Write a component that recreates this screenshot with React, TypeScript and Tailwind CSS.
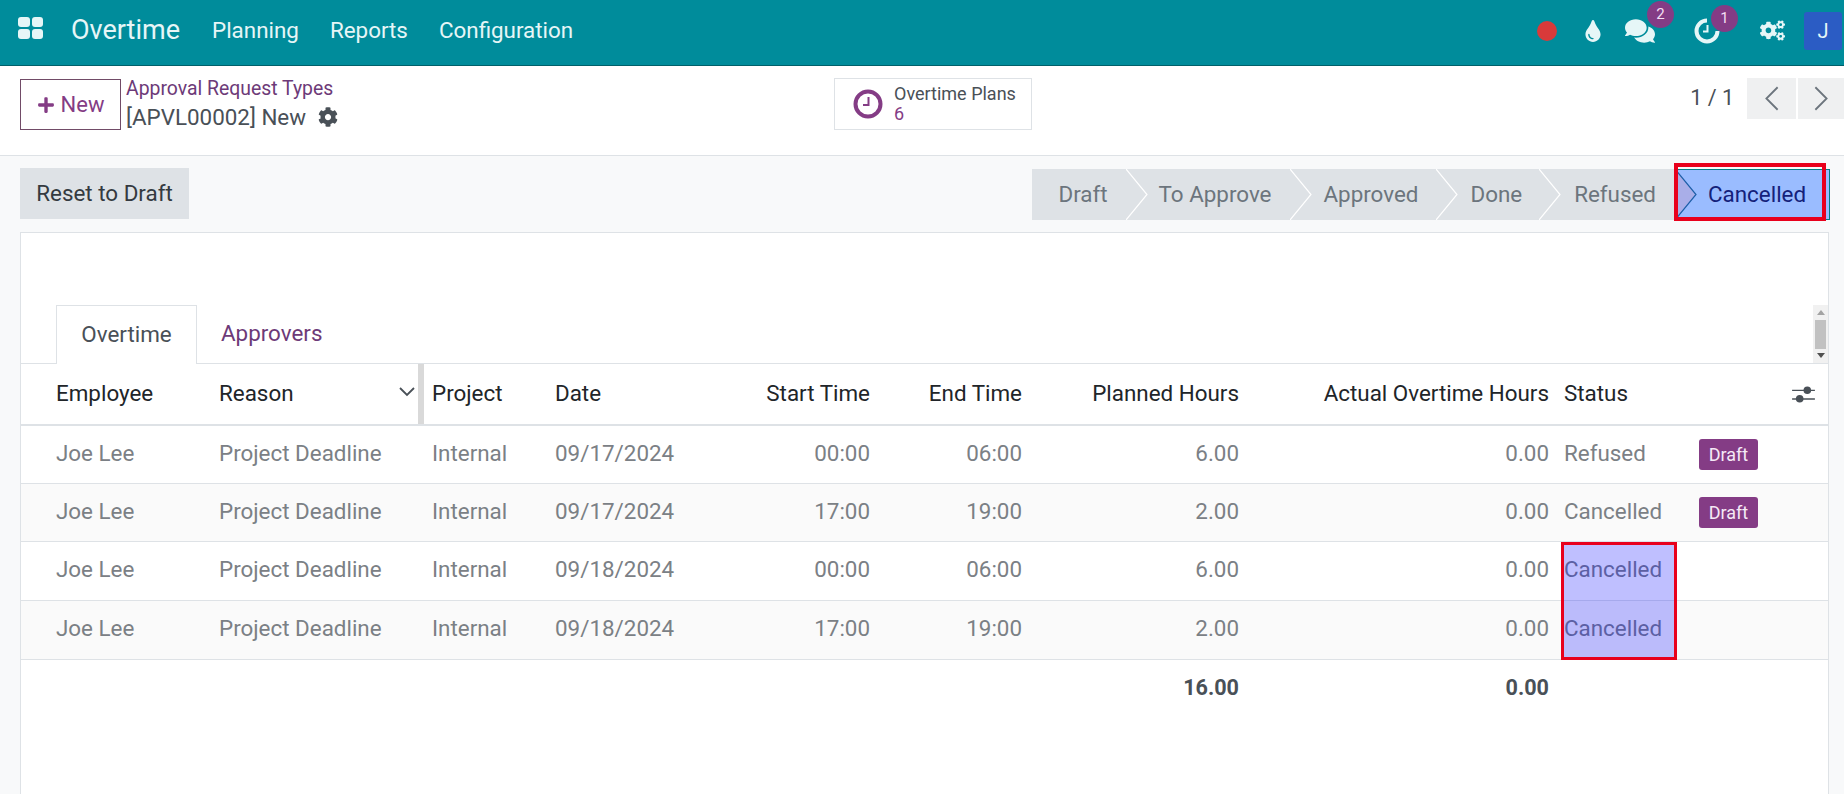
import { FaCog, FaCogs, FaComments, FaPlus, FaTint } from 'react-icons/fa';

interface Row {
  date: string;
  start: string;
  end: string;
  planned: string;
  status: string;
  badge?: boolean;
}

const rows: Row[] = [
  { date: '09/17/2024', start: '00:00', end: '06:00', planned: '6.00', status: 'Refused', badge: true },
  { date: '09/17/2024', start: '17:00', end: '19:00', planned: '2.00', status: 'Cancelled', badge: true },
  { date: '09/18/2024', start: '00:00', end: '06:00', planned: '6.00', status: 'Cancelled' },
  { date: '09/18/2024', start: '17:00', end: '19:00', planned: '2.00', status: 'Cancelled' },
];

// Status bar stages, widths come from the text plus the padding
const stages = [
  { label: 'Draft', className: 'pl-[26px] pr-[18px]' },
  { label: 'To Approve', className: 'pl-[33px] pr-[18px]' },
  { label: 'Approved', className: 'pl-[34px] pr-[18px]' },
  { label: 'Done', className: 'pl-[34px] pr-[17px]' },
  { label: 'Refused', className: 'pl-[35px] pr-[19px]' },
];

function AppsIcon() {
  return (
    <div className="grid grid-cols-2 gap-[2px] w-[25px] h-[22px]">
      <span className="rounded-[3px] bg-[#e6f6f7]" />
      <span className="rounded-[3px] bg-[#e6f6f7]" />
      <span className="rounded-[3px] bg-[#e6f6f7]" />
      <span className="rounded-[3px] bg-[#e6f6f7]" />
    </div>
  );
}

function CountBadge({ value, className }: { value: string; className: string }) {
  return (
    <span className={`absolute flex items-center justify-center w-[27px] h-[27px] rounded-full bg-[#843c85] text-[#f3dff3] text-[15px] ${className}`}>
      {value}
    </span>
  );
}

function Navbar() {
  return (
    <header className="h-[66px] shrink-0 flex items-center pb-[4px] bg-[#008c9b] border-b border-[#00606a] text-[#e6f6f7]">
      <div className="ml-[18px] mr-[28px] mb-[5px] flex items-center">
        <AppsIcon />
      </div>
      <span className="text-[27px] mr-[32px]">Overtime</span>
      <nav className="flex gap-[31px] text-[22.4px]">
        <span>Planning</span>
        <span>Reports</span>
        <span>Configuration</span>
      </nav>
      <div className="ml-auto flex items-center h-full">
        <span className="w-[20px] h-[20px] rounded-full bg-[#d93a3a]" />
        <FaTint className="ml-[25px] text-[22px]" />
        <div className="relative ml-[21px]">
          <FaComments className="text-[30px]" />
          <CountBadge value="2" className="-top-[15px] left-[22px]" />
        </div>
        <div className="relative ml-[39px]">
          <svg viewBox="0 0 26 26" className="w-[26px] h-[26px]" fill="none" stroke="currentColor">
            <path d="M13 2.5 A10.5 10.5 0 1 0 23.5 13" strokeWidth="4" />
            <path d="M13.5 7v6.5H9" strokeWidth="2" />
          </svg>
          <CountBadge value="1" className="-top-[13px] left-[17px]" />
        </div>
        <FaCogs className="ml-[40px] text-[25px]" />
        <span className="ml-[19px] mr-[2px] w-[38px] h-[38px] rounded-[3px] bg-[#2b5cc4] flex items-center justify-center text-[20px]">J</span>
      </div>
    </header>
  );
}

function ControlPanel() {
  return (
    <div className="h-[90px] shrink-0 flex items-start bg-white border-b border-[#dee2e6] pl-[20px]">
      <button className="mt-[13px] w-[101px] h-[51px] flex items-center justify-center gap-[6px] border border-[#714b67] text-[#843c85] text-[22px]">
        <FaPlus className="text-[18px]" />
        New
      </button>
      <div className="ml-[5px] mt-[10px] w-[708px]">
        <div className="text-[#6d3a78] text-[19.4px] leading-[26px]">Approval Request Types</div>
        <div className="flex items-center gap-[12px] text-[#495057] text-[22.4px] leading-[30px]">
          [APVL00002] New
          <FaCog className="text-[20px]" />
        </div>
      </div>
      <button className="mt-[12px] w-[198px] h-[52px] flex items-center border border-[#dee2e6] pl-[18px]">
        <svg viewBox="0 0 30 30" className="w-[30px] h-[30px] text-[#843c85]" fill="none" stroke="currentColor">
          <circle cx="15" cy="15" r="12.5" strokeWidth="4" />
          <path d="M15.5 8v8H10" strokeWidth="2" />
        </svg>
        <div className="ml-[11px] text-left text-[18px] leading-[20px]">
          <div className="text-[#495057]">Overtime Plans</div>
          <div className="text-[#843c85]">6</div>
        </div>
      </button>
      <div className="ml-auto flex items-start mt-[12px]">
        <span className="mt-[6px] mr-[13px] text-[#495057] text-[21.5px] leading-[28px]">1 / 1</span>
        <button className="w-[49px] h-[41px] bg-[#eff0f1] flex items-center justify-center">
          <svg viewBox="0 0 14 24" className="w-[16px] h-[27px]" fill="none" stroke="#6c757d" strokeWidth="1.6">
            <path d="M12 2 2 12l10 10" />
          </svg>
        </button>
        <button className="ml-[2px] w-[46px] h-[41px] bg-[#eff0f1] flex items-center justify-center">
          <svg viewBox="0 0 14 24" className="w-[16px] h-[27px]" fill="none" stroke="#6c757d" strokeWidth="1.6">
            <path d="M2 2l10 10L2 22" />
          </svg>
        </button>
      </div>
    </div>
  );
}

function StatusBar() {
  return (
    <div className="mt-px flex h-[51px] text-[22.4px]">
      {stages.map((stage, i) => (
        <div key={stage.label} className={`relative flex items-center bg-[#dee2e6] text-[#6c757d] ${stage.className}`}>
          {stage.label}
          {i > 0 && (
            <svg viewBox="0 0 22 51" className="absolute left-0 top-0 w-[22px] h-[51px]" fill="none" stroke="#ffffff" strokeWidth="1.2">
              <path d="M0 0 21 25.5 0 51" />
            </svg>
          )}
        </div>
      ))}
      <div className="relative flex items-center w-[155px] pl-[33px] bg-[#9abcff] border-y border-r border-[#017e84] text-[#14217a]">
        Cancelled
        <svg viewBox="0 0 22 51" className="absolute left-0 -top-px w-[22px] h-[51px]">
          <path d="M0 0 21 25.5 0 51Z" fill="#a9aee8" stroke="#1d5fa8" strokeWidth="1.2" />
        </svg>
        <span className="absolute -left-px -top-[7px] w-[152px] h-[58px] border-[4px] border-[#e8001c]" />
      </div>
    </div>
  );
}

function OvertimeTable() {
  return (
    <table className="w-full table-fixed text-[22.4px]">
      <colgroup>
        <col className="w-[191px]" />
        <col className="w-[212px]" />
        <col className="w-[124px]" />
        <col className="w-[165px]" />
        <col className="w-[164px]" />
        <col className="w-[152px]" />
        <col className="w-[217px]" />
        <col className="w-[310px]" />
        <col className="w-[135px]" />
        <col className="w-[137px]" />
      </colgroup>
      <thead>
        <tr className="h-[61px] border-b-2 border-[#dee2e6] text-[#212529] text-left">
          <th className="font-normal pl-[35px]">Employee</th>
          <th className="relative font-normal pl-[7px]">
            Reason
            <svg viewBox="0 0 16 10" className="absolute right-[9px] top-[23px] w-[16px] h-[10px]" fill="none" stroke="#495057" strokeWidth="1.8">
              <path d="M1 1l7 7 7-7" />
            </svg>
            <span className="absolute right-0 inset-y-0 w-[6px] bg-[#d9d9d9]" />
          </th>
          <th className="font-normal pl-[8px]">Project</th>
          <th className="font-normal pl-[7px]">Date</th>
          <th className="font-normal pr-[7px] text-right">Start Time</th>
          <th className="font-normal pr-[7px] text-right">End Time</th>
          <th className="font-normal pr-[7px] text-right">Planned Hours</th>
          <th className="font-normal pr-[7px] text-right">Actual Overtime Hours</th>
          <th className="font-normal pl-[8px]">Status</th>
          <th className="pr-[13px]">
            <svg viewBox="0 0 24 20" className="ml-auto w-[23px] h-[19px]" fill="#495057">
              <path d="M0 5h24v1.4H0zM0 14h24v1.4H0z" />
              <circle cx="16" cy="5.5" r="4" />
              <circle cx="8" cy="14.5" r="4" />
            </svg>
          </th>
        </tr>
      </thead>
      <tbody className="text-[#7b8085]">
        {rows.map((row, i) => (
          <tr key={i} className={`border-b border-[#dee2e6] ${i < 2 ? 'h-[58px]' : 'h-[59px]'} ${i % 2 === 1 ? 'bg-[#fafafa]' : 'bg-white'}`}>
            <td className="pl-[35px] pb-px">Joe Lee</td>
            <td className="pl-[7px] pb-px">Project Deadline</td>
            <td className="pl-[8px] pb-px">Internal</td>
            <td className="pl-[7px] pb-px">{row.date}</td>
            <td className="pr-[7px] pb-px text-right">{row.start}</td>
            <td className="pr-[7px] pb-px text-right">{row.end}</td>
            <td className="pr-[7px] pb-px text-right">{row.planned}</td>
            <td className="pr-[7px] pb-px text-right">0.00</td>
            <td className="relative pl-[8px] pb-px">
              {row.status}
              {i === 2 && (
                <span className="absolute z-10 left-[5px] top-0 w-[116px] h-[118px] bg-[#0000ff]/25 border-[3px] border-[#e8001c]" />
              )}
            </td>
            <td className="pl-[8px]">
              {row.badge && (
                <span className="inline-flex items-center justify-center w-[59px] h-[31px] rounded-[3px] bg-[#843c85] text-[#f5e9f5] text-[18px]">
                  Draft
                </span>
              )}
            </td>
          </tr>
        ))}
        <tr className="h-[58px] font-bold text-[21.6px] text-[#495057]">
          <td colSpan={6} />
          <td className="pr-[7px] text-right">16.00</td>
          <td className="pr-[7px] text-right">0.00</td>
          <td colSpan={2} />
        </tr>
      </tbody>
    </table>
  );
}

export default function App() {
  return (
    <div className="h-screen flex flex-col overflow-hidden bg-[#f8f9fa] font-['Roboto',sans-serif]">
      <Navbar />
      <ControlPanel />
      <div className="shrink-0 h-[76px] pt-[12px] pl-[20px] pr-[14px] flex items-start justify-between">
        <button className="w-[169px] h-[51px] bg-[#dee2e6] text-[#343a40] text-[22.4px]">Reset to Draft</button>
        <StatusBar />
      </div>
      <main className="flex-1 ml-[20px] mr-[15px] bg-white border border-b-0 border-[#dee2e6] pt-[72px]">
        <div className="flex h-[59px] border-b border-[#dee2e6] text-[22.4px]">
          <div className="ml-[35px] w-[141px] h-[59px] flex items-center justify-center border border-b-0 border-[#dee2e6] bg-white text-[#495057]">
            Overtime
          </div>
          <div className="ml-[24px] flex items-center text-[#6d3a78]">Approvers</div>
          <div className="ml-auto w-[15px] h-[58px] bg-[#f1f1f1] flex flex-col items-center justify-between py-[5px]">
            <span className="w-0 h-0 border-x-[4px] border-x-transparent border-b-[5px] border-b-[#a3a3a3]" />
            <span className="w-[11px] h-[29px] bg-[#c1c1c1]" />
            <span className="w-0 h-0 border-x-[4px] border-x-transparent border-t-[5px] border-t-[#505050]" />
          </div>
        </div>
        <OvertimeTable />
      </main>
    </div>
  );
}
